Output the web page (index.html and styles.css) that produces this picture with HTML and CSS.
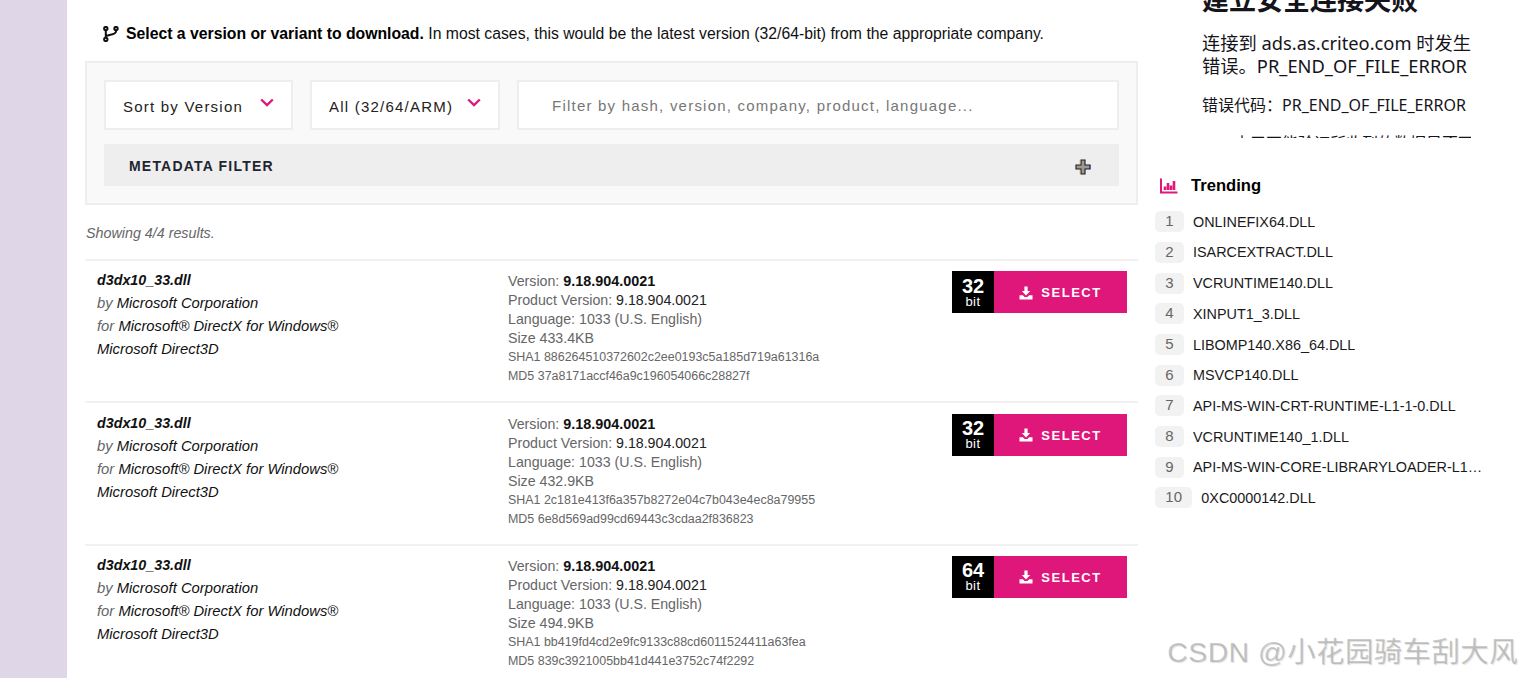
FILE: index.html
```html
<!DOCTYPE html>
<html lang="en">
<head>
    <meta charset="UTF-8">
    <meta name="viewport" content="width=device-width, initial-scale=1.0">
    <title>d3dx10_33.dll versions</title>
    <link rel="stylesheet" href="styles.css">
</head>
<body>
    <div class="page">
        <div class="strip"></div>

        <main class="main">
            <p class="intro">
                <svg class="branch-icon" viewBox="0 0 16 16" width="16" height="16">
                    <circle cx="2.8" cy="2.6" r="1.7"/>
                    <circle cx="13" cy="2.6" r="1.7"/>
                    <circle cx="2.8" cy="13.4" r="1.7"/>
                    <path d="M2.8 4.2V11.8M13 4.2V5.5C13 8.4 8 8.2 2.8 10"/>
                </svg>
                <span><strong>Select a version or variant to download.</strong> In most cases, this would be the latest version (32/64-bit) from the appropriate company.</span>
            </p>

            <section class="filters">
                <div class="filter-row">
                    <div class="select-box sort-box">
                        <span>Sort by Version</span>
                        <svg class="chevron" viewBox="0 0 14 9" width="14" height="9"><path d="M1.2 1.5L7 7L12.8 1.5"/></svg>
                    </div>
                    <div class="select-box arch-box">
                        <span>All (32/64/ARM)</span>
                        <svg class="chevron" viewBox="0 0 14 9" width="14" height="9"><path d="M1.2 1.5L7 7L12.8 1.5"/></svg>
                    </div>
                    <div class="search-box">Filter by hash, version, company, product, language...</div>
                </div>
                <div class="metadata-bar">
                    <span>METADATA FILTER</span>
                    <svg class="plus-icon" viewBox="0 0 16 16" width="16" height="16">
                        <path d="M6 1H10V6H15V10H10V15H6V10H1V6H6Z"/>
                        <path class="fringe-warm" d="M5.2 1V5.2M5.2 10.8V15"/>
                        <path class="fringe-cool" d="M15.6 6V10"/>
                    </svg>
                </div>
            </section>

            <p class="showing">Showing 4/4 results.</p>

            <article class="result">
                <div class="result-name">
                    <div><b>d3dx10_33.dll</b></div>
                    <div><i>by</i> Microsoft Corporation</div>
                    <div><i>for</i> Microsoft® DirectX for Windows®</div>
                    <div>Microsoft Direct3D</div>
                </div>
                <div class="result-meta">
                    <div>Version: <b>9.18.904.0021</b></div>
                    <div>Product Version: <em>9.18.904.0021</em></div>
                    <div>Language: 1033 (U.S. English)</div>
                    <div>Size 433.4KB</div>
                    <div class="hash">SHA1 886264510372602c2ee0193c5a185d719a61316a</div>
                    <div class="hash">MD5 37a8171accf46a9c196054066c28827f</div>
                </div>
                <div class="result-action">
                    <div class="bits"><b>32</b><span>bit</span></div>
                    <a class="select-btn">
                        <svg viewBox="0 0 14 14" width="14" height="14"><path d="M5.4 0.5H8.6V5H11.2L7 9.4L2.8 5H5.4Z"/><path d="M0.5 9.2H3.8L5.6 11H8.4L10.2 9.2H13.5V13.5H0.5Z"/></svg>
                        SELECT
                    </a>
                </div>
            </article>

            <article class="result">
                <div class="result-name">
                    <div><b>d3dx10_33.dll</b></div>
                    <div><i>by</i> Microsoft Corporation</div>
                    <div><i>for</i> Microsoft® DirectX for Windows®</div>
                    <div>Microsoft Direct3D</div>
                </div>
                <div class="result-meta">
                    <div>Version: <b>9.18.904.0021</b></div>
                    <div>Product Version: <em>9.18.904.0021</em></div>
                    <div>Language: 1033 (U.S. English)</div>
                    <div>Size 432.9KB</div>
                    <div class="hash">SHA1 2c181e413f6a357b8272e04c7b043e4ec8a79955</div>
                    <div class="hash">MD5 6e8d569ad99cd69443c3cdaa2f836823</div>
                </div>
                <div class="result-action">
                    <div class="bits"><b>32</b><span>bit</span></div>
                    <a class="select-btn">
                        <svg viewBox="0 0 14 14" width="14" height="14"><path d="M5.4 0.5H8.6V5H11.2L7 9.4L2.8 5H5.4Z"/><path d="M0.5 9.2H3.8L5.6 11H8.4L10.2 9.2H13.5V13.5H0.5Z"/></svg>
                        SELECT
                    </a>
                </div>
            </article>

            <article class="result">
                <div class="result-name">
                    <div><b>d3dx10_33.dll</b></div>
                    <div><i>by</i> Microsoft Corporation</div>
                    <div><i>for</i> Microsoft® DirectX for Windows®</div>
                    <div>Microsoft Direct3D</div>
                </div>
                <div class="result-meta">
                    <div>Version: <b>9.18.904.0021</b></div>
                    <div>Product Version: <em>9.18.904.0021</em></div>
                    <div>Language: 1033 (U.S. English)</div>
                    <div>Size 494.9KB</div>
                    <div class="hash">SHA1 bb419fd4cd2e9fc9133c88cd6011524411a63fea</div>
                    <div class="hash">MD5 839c3921005bb41d441e3752c74f2292</div>
                </div>
                <div class="result-action">
                    <div class="bits"><b>64</b><span>bit</span></div>
                    <a class="select-btn">
                        <svg viewBox="0 0 14 14" width="14" height="14"><path d="M5.4 0.5H8.6V5H11.2L7 9.4L2.8 5H5.4Z"/><path d="M0.5 9.2H3.8L5.6 11H8.4L10.2 9.2H13.5V13.5H0.5Z"/></svg>
                        SELECT
                    </a>
                </div>
            </article>
        </main>

        <aside class="side">
            <div class="ad-frame">
                <h2>建立安全连接失败</h2>
                <p class="ad-lead">连接到 ads.as.criteo.com 时发生<br>错误。PR_END_OF_FILE_ERROR</p>
                <p class="ad-code">错误代码：PR_END_OF_FILE_ERROR</p>
                <p class="ad-more">由于不能验证所收到的数据是否可</p>
            </div>

            <h3 class="trending-title">
                <svg viewBox="0 0 18 16" width="18" height="16"><path d="M1 0.5V14.5H17.5"/><path class="bars" d="M5 12V8.5M8 12V5M11 12V7.5M14 12V3"/></svg>
                Trending
            </h3>
            <ol class="trending">
                <li><span class="rank">1</span><span class="dll">ONLINEFIX64.DLL</span></li>
                <li><span class="rank">2</span><span class="dll">ISARCEXTRACT.DLL</span></li>
                <li><span class="rank">3</span><span class="dll">VCRUNTIME140.DLL</span></li>
                <li><span class="rank">4</span><span class="dll">XINPUT1_3.DLL</span></li>
                <li><span class="rank">5</span><span class="dll">LIBOMP140.X86_64.DLL</span></li>
                <li><span class="rank">6</span><span class="dll">MSVCP140.DLL</span></li>
                <li><span class="rank">7</span><span class="dll">API-MS-WIN-CRT-RUNTIME-L1-1-0.DLL</span></li>
                <li><span class="rank">8</span><span class="dll">VCRUNTIME140_1.DLL</span></li>
                <li><span class="rank">9</span><span class="dll">API-MS-WIN-CORE-LIBRARYLOADER-L1-2-0.DLL</span></li>
                <li><span class="rank">10</span><span class="dll">0XC0000142.DLL</span></li>
            </ol>
        </aside>
    </div>

    <div class="watermark">CSDN @小花园骑车刮大风</div>
</body>
</html>
```

FILE: styles.css
```css
html, body {
    margin: 0;
    height: 100%;
    overflow: hidden;
    background: #fff;
}

body {
    font-family: "Liberation Sans", Arial, sans-serif;
    font-size: 14px;
    color: #111;
}

.page {
    display: flex;
    height: 678px;
    overflow: hidden;
}

.strip {
    flex: 0 0 67px;
    background: #dfd7e8;
}

/* main column */
.main {
    flex: 0 0 1053px;
    margin-left: 18px;
}

.intro {
    display: flex;
    align-items: center;
    gap: 7px;
    margin: 0;
    padding: 24px 0 0 18px;
    height: 43px;
    box-sizing: border-box;
    font-size: 15.78px;
    line-height: 18px;
    color: #111;
}

.intro strong {
    color: #000;
}

.branch-icon {
    flex: none;
    fill: none;
    stroke: #111;
    stroke-width: 2;
}

.filters {
    margin-top: 18px;
    padding: 17px;
    height: 144px;
    box-sizing: border-box;
    background: #f9f9f9;
    border: 2px solid #eee;
}

.filter-row {
    display: flex;
    gap: 17px;
    height: 50px;
}

.select-box,
.search-box {
    display: flex;
    align-items: center;
    box-sizing: border-box;
    height: 50px;
    background: #fff;
    border: 2px solid #eee;
    font-size: 15px;
    letter-spacing: 1.22px;
}

.select-box {
    justify-content: space-between;
    padding: 3px 17px 0 17px;
    color: #222;
}

.sort-box {
    width: 189px;
}

.arch-box {
    width: 190px;
}

.search-box {
    flex: 1;
    padding: 0 0 0 33px;
    color: #777;
}

.chevron {
    margin-top: -8px;
    fill: none;
    stroke: #e0177b;
    stroke-width: 2.4;
}

.metadata-bar {
    display: flex;
    align-items: center;
    justify-content: space-between;
    height: 42px;
    margin-top: 14px;
    padding: 0 28px 0 25px;
    background: #eee;
    font-size: 14px;
    font-weight: bold;
    letter-spacing: 1.2px;
    color: #1f2430;
}

.metadata-bar span {
    padding-top: 2px;
}

.plus-icon {
    margin-top: 3px;
    fill: #999;
    stroke: #1c1c1c;
    stroke-width: 1.1;
}

.fringe-warm {
    fill: none;
    stroke: #d98a2b;
    stroke-width: 0.8;
}

.fringe-cool {
    fill: none;
    stroke: #2f5fb0;
    stroke-width: 0.8;
}

.showing {
    margin: 20px 0 0;
    padding-left: 1px;
    height: 34px;
    font-size: 14.3px;
    font-style: italic;
    color: #666;
}

/* result rows */
.result {
    display: flex;
    box-sizing: border-box;
    height: 142.4px;
    padding-top: 8.2px;
    border-top: 2px solid #f1f1f1;
}

.result-name {
    flex: 0 0 411px;
    padding-left: 12px;
    font-size: 14.8px;
    font-style: italic;
    line-height: 23px;
}

.result-name b {
    font-size: 14.3px;
}

.result-name i {
    color: #666;
}

.result-meta {
    flex: 0 0 444px;
    margin-top: 3px;
    font-size: 14.2px;
    line-height: 19px;
    color: #666;
}

.result-meta b {
    font-size: 14.4px;
    color: #111;
}

.result-meta em {
    font-style: normal;
    color: #222;
}

.hash {
    font-size: 12.45px;
}

.result-action {
    display: flex;
    height: 42px;
    margin-top: 2px;
}

.bits {
    display: flex;
    flex-direction: column;
    align-items: center;
    justify-content: center;
    box-sizing: border-box;
    width: 42px;
    padding-bottom: 2px;
    background: #000;
    color: #fff;
}

.bits b {
    font-size: 20px;
    line-height: 20px;
}

.bits span {
    font-size: 13px;
    line-height: 11px;
    letter-spacing: 0.5px;
}

.select-btn {
    display: flex;
    align-items: center;
    justify-content: center;
    gap: 8px;
    box-sizing: border-box;
    width: 133px;
    padding-top: 1px;
    background: #e0177b;
    color: #fff;
    font-size: 13px;
    font-weight: bold;
    letter-spacing: 1.5px;
}

.select-btn svg {
    fill: #fff;
}

/* sidebar */
.side {
    flex: 0 0 auto;
    width: 366px;
    margin-left: 17px;
}

.ad-frame {
    height: 138px;
    margin-left: 47px;
    width: 269px;
    overflow: hidden;
    font-family: "Noto Sans", "Noto Sans CJK SC", sans-serif;
    color: #15141a;
}

.ad-frame h2 {
    margin: -17px 0 0;
    font-family: "Noto Sans CJK SC", sans-serif;
    font-size: 27px;
    line-height: 32px;
}

.ad-lead {
    margin: 16px 0 0;
    font-size: 18.3px;
    line-height: 23px;
    white-space: nowrap;
}

.ad-code {
    margin: 17px 0 0;
    font-size: 16px;
    line-height: 22px;
}

.ad-more {
    margin: 16px 0 0 32px;
    font-size: 16px;
    line-height: 22px;
    white-space: nowrap;
}

.trending-title {
    display: flex;
    align-items: center;
    gap: 13px;
    margin: 37px 0 0 5px;
    font-size: 16.6px;
    line-height: 22px;
    color: #000;
}

.trending-title svg {
    fill: none;
    stroke: #e0177b;
    stroke-width: 2;
}

.trending-title .bars {
    stroke-width: 2.6;
}

.trending {
    list-style: none;
    margin: 14.3px 0 0;
    padding: 0;
}

.trending li {
    display: flex;
    align-items: center;
    height: 21px;
    margin-bottom: 9.7px;
}

.rank {
    flex: none;
    height: 21px;
    padding: 0 10.3px;
    box-sizing: border-box;
    border-radius: 5px;
    background: #f2f2f2;
    color: #666;
    font-size: 15px;
    line-height: 19px;
    text-align: center;
}

.dll {
    margin-left: 9px;
    max-width: 292px;
    overflow: hidden;
    white-space: nowrap;
    text-overflow: ellipsis;
    font-size: 14.4px;
    color: #1a1a1a;
}

.watermark {
    position: absolute;
    right: 3px;
    top: 634px;
    font-family: "Liberation Sans", "Noto Sans CJK SC", sans-serif;
    font-size: 28.35px;
    line-height: 36px;
    letter-spacing: 0.5px;
    color: rgba(140, 140, 140, 0.45);
    text-shadow: 1px 1px 1px rgba(0, 0, 0, 0.12);
    white-space: nowrap;
}
```
